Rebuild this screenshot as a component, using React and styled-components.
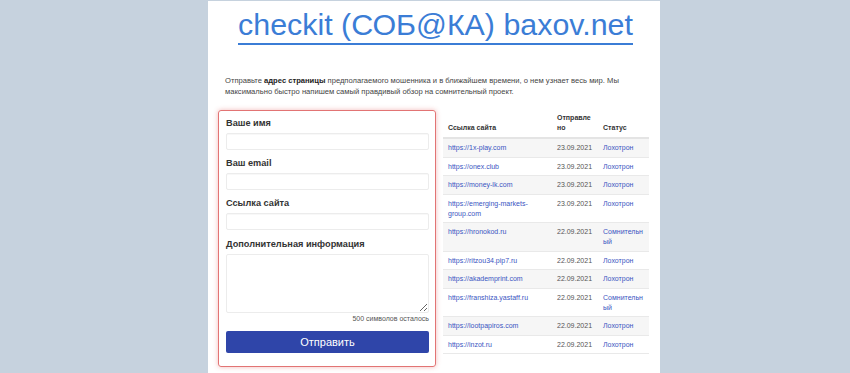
import styled, { createGlobalStyle } from 'styled-components'

const GlobalStyle = createGlobalStyle`
  html, body {
    margin: 0;
    padding: 0;
    background: #c6d2de;
    font-family: 'Liberation Sans', Arial, sans-serif;
  }
  * { box-sizing: border-box; }
`

const Page = styled.div`
  width: 452px;
  min-height: 372px;
  margin: 1px 0 0 208px;
  padding: 0 11px 0 10px;
  background: #fff;
`

const TitleRow = styled.div`
  text-align: center;
  padding: 6px 0 0 4px;
`

const Title = styled.a`
  display: inline-block;
  font-size: 30.4px;
  line-height: 34px;
  font-weight: 400;
  color: #3b7dd6;
  text-decoration: none;
  padding-bottom: 2px;
  border-bottom: 2px solid #3b7dd6;
`

const Intro = styled.p`
  margin: 30px 0 13px;
  padding: 0 7px;
  font-size: 7.6px;
  line-height: 11px;
  color: #444;

  b { color: #222; }
`

const Columns = styled.div`
  display: flex;
  gap: 7px;
  align-items: flex-start;
`

const FormBox = styled.form`
  width: 218px;
  border: 1.5px solid #e27474;
  border-radius: 3px;
  box-shadow: 0 0 5px rgba(226, 100, 100, 0.45);
  padding: 6px 6px 13px 7px;
`

const Label = styled.label`
  display: block;
  font-size: 9.2px;
  line-height: 13px;
  font-weight: 700;
  color: #333;
  margin: 0 0 3px;
`

const Input = styled.input`
  display: block;
  width: 100%;
  height: 17px;
  margin: 0 0 7.2px;
  border: 1px solid #ececec;
  border-radius: 2px;
  box-shadow: inset 0 1px 1px rgba(0, 0, 0, 0.03);
  background: #fff;
  font-size: 8px;
`

const TextArea = styled.textarea`
  display: block;
  width: 100%;
  height: 59px;
  margin: 0;
  border: 1px solid #ececec;
  border-radius: 2px;
  background: #fff;
  resize: vertical;
  font-size: 8px;
`

const Counter = styled.div`
  text-align: right;
  font-size: 7px;
  line-height: 11px;
  color: #555;
  margin-bottom: 7px;
`

const SubmitButton = styled.button`
  display: block;
  width: 100%;
  height: 22px;
  border: none;
  border-radius: 2px;
  background: #2f45a9;
  color: #fff;
  font-family: inherit;
  font-size: 11px;
`

const Table = styled.table`
  width: 206px;
  table-layout: fixed;
  border-collapse: collapse;
  font-size: 7px;
  line-height: 10px;
`

const HeadCell = styled.th`
  width: ${p => p.$w}px;
  text-align: left;
  vertical-align: bottom;
  font-weight: 700;
  color: #333;
  padding: 3px ${p => p.$pr || 4}px 4px 5px;
  border-bottom: 2px solid #e4e4e4;
  word-break: break-all;
`

const Row = styled.tr`
  background: ${p => (p.$odd ? '#f6f6f6' : '#fff')};
  border-bottom: 1px solid #e9e9e9;
`

const Cell = styled.td`
  vertical-align: top;
  padding: 4px 4px 3.5px 5px;
  color: ${p => (p.$muted ? '#555' : '#3a55c2')};
  word-break: break-all;
`

const LinkCell = styled(Cell)`
  word-break: normal;
  overflow-wrap: break-word;
`

const DateCell = styled(Cell)`
  white-space: nowrap;
`

const rows = [
  ['https://1x-play.com', '23.09.2021', 'Лохотрон'],
  ['https://onex.club', '23.09.2021', 'Лохотрон'],
  ['https://money-lk.com', '23.09.2021', 'Лохотрон'],
  ['https://emerging-markets-group.com', '23.09.2021', 'Лохотрон'],
  ['https://hronokod.ru', '22.09.2021', 'Сомнительный'],
  ['https://ritzou34.pip7.ru', '22.09.2021', 'Лохотрон'],
  ['https://akademprint.com', '22.09.2021', 'Лохотрон'],
  ['https://franshiza.yastaff.ru', '22.09.2021', 'Сомнительный'],
  ['https://lootpapiros.com', '22.09.2021', 'Лохотрон'],
  ['https://inzot.ru', '22.09.2021', 'Лохотрон'],
]

function App() {
  return (
    <>
      <GlobalStyle />
      <Page>
        <TitleRow>
          <Title href="#">checkit (СОБ@КА) baxov.net</Title>
        </TitleRow>
        <Intro>
          Отправьте <b>адрес страницы</b> предполагаемого мошенника и в ближайшем времени, о нем узнает весь мир. Мы максимально быстро напишем самый правдивый обзор на сомнительный проект.
        </Intro>
        <Columns>
          <FormBox onSubmit={e => e.preventDefault()}>
            <Label>Ваше имя</Label>
            <Input type="text" />
            <Label>Ваш email</Label>
            <Input type="email" />
            <Label>Ссылка сайта</Label>
            <Input type="text" />
            <Label>Дополнительная информация</Label>
            <TextArea />
            <Counter>500 символов осталось</Counter>
            <SubmitButton type="submit">Отправить</SubmitButton>
          </FormBox>
          <Table>
            <thead>
              <tr>
                <HeadCell $w={109}>Ссылка сайта</HeadCell>
                <HeadCell $w={46} $pr={5}>Отправлено</HeadCell>
                <HeadCell $w={51}>Статус</HeadCell>
              </tr>
            </thead>
            <tbody>
              {rows.map(([link, date, status], i) => (
                <Row key={link} $odd={i % 2 === 0}>
                  <LinkCell>{link}</LinkCell>
                  <DateCell $muted>{date}</DateCell>
                  <Cell>{status}</Cell>
                </Row>
              ))}
            </tbody>
          </Table>
        </Columns>
      </Page>
    </>
  )
}

export default App
